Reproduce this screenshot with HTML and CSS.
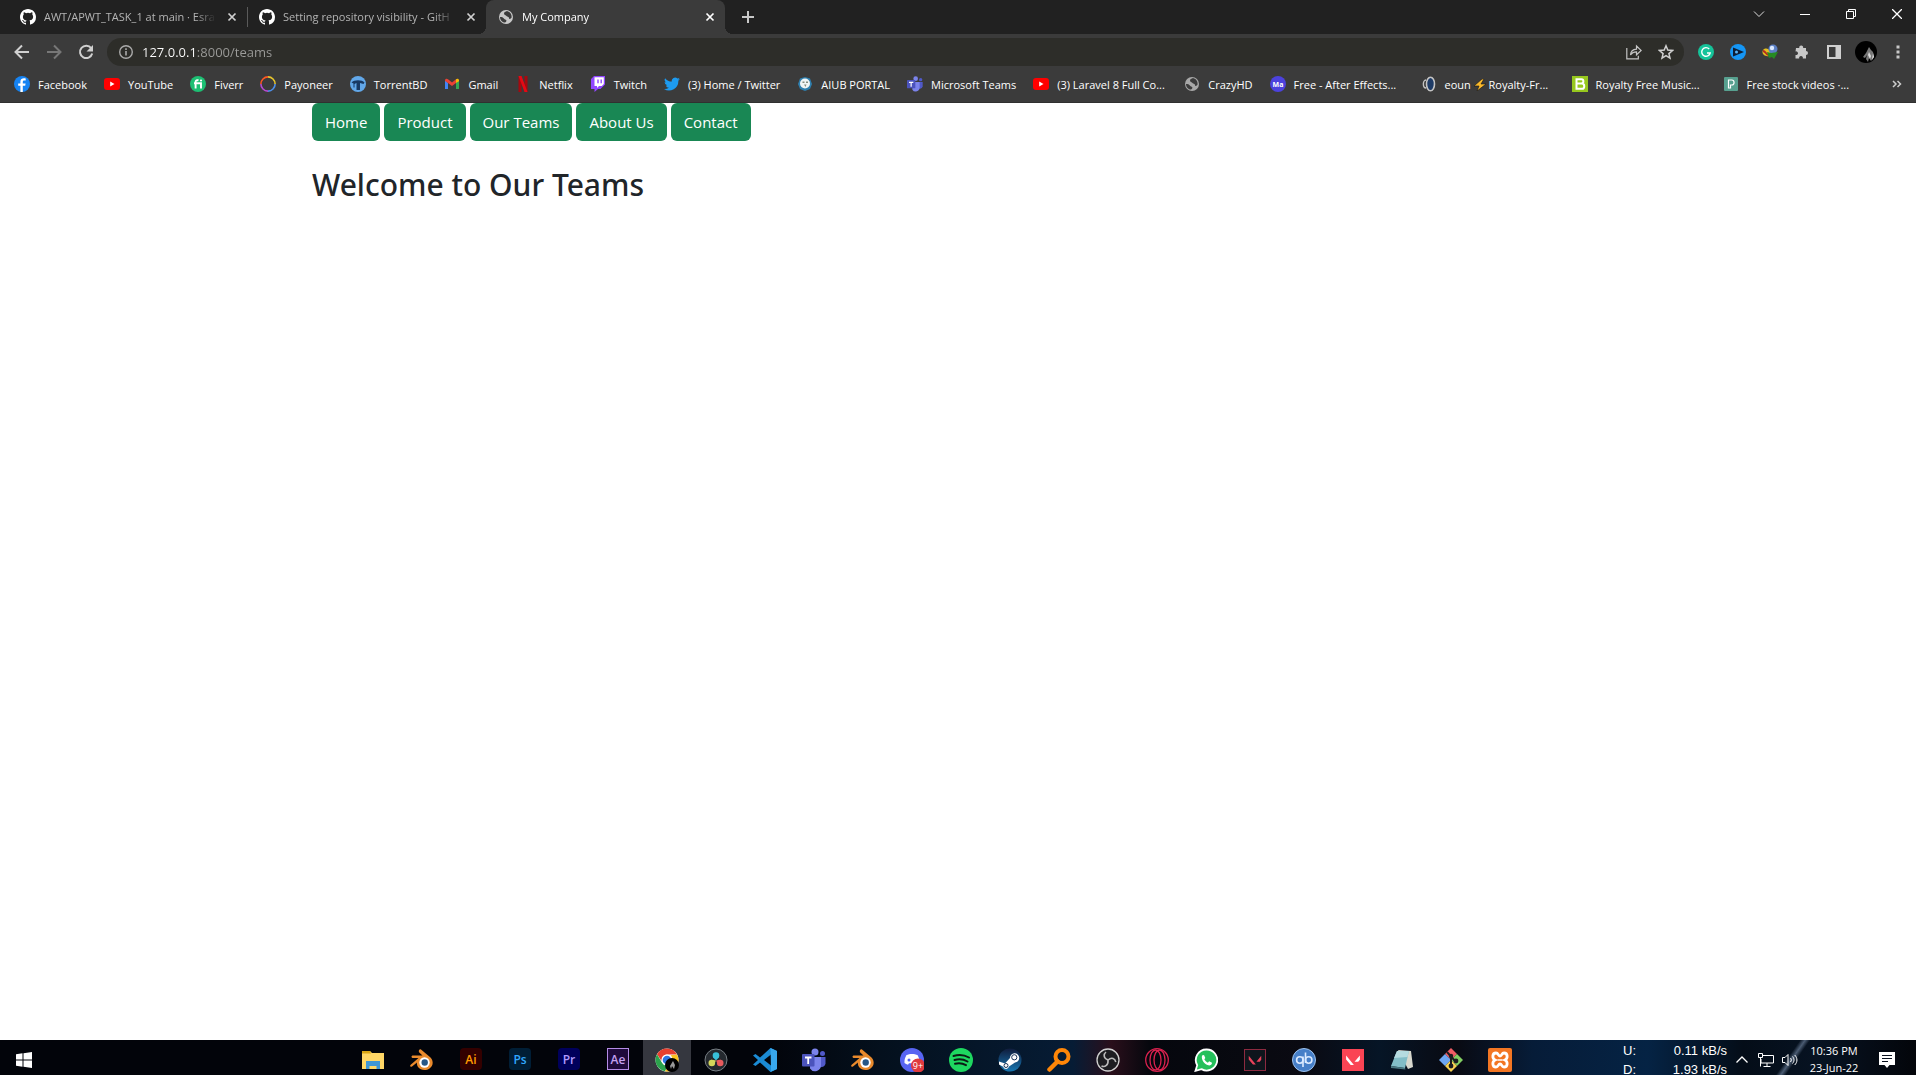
FILE: index.html
```html
<!DOCTYPE html>
<html lang="en">
<head>
<meta charset="utf-8">
<title>My Company</title>
<link rel="stylesheet" href="styles.css">
</head>
<body>
<svg class="sprite" aria-hidden="true">
  <symbol id="github" viewBox="0 0 16 16"><path d="M8 0C3.58 0 0 3.58 0 8c0 3.54 2.29 6.53 5.47 7.59.4.07.55-.17.55-.38 0-.19-.01-.82-.01-1.49-2.01.37-2.53-.49-2.69-.94-.09-.23-.48-.94-.82-1.13-.28-.15-.68-.52-.01-.53.63-.01 1.08.58 1.23.82.72 1.21 1.87.87 2.33.66.07-.52.28-.87.51-1.07-1.78-.2-3.64-.89-3.64-3.95 0-.87.31-1.59.82-2.15-.08-.2-.36-1.02.08-2.12 0 0 .67-.21 2.2.82a7.6 7.6 0 0 1 4 0c1.53-1.04 2.2-.82 2.2-.82.44 1.1.16 1.92.08 2.12.51.56.82 1.27.82 2.15 0 3.07-1.87 3.75-3.65 3.95.29.25.54.73.54 1.48 0 1.07-.01 1.93-.01 2.2 0 .21.15.46.55.38A8 8 0 0 0 16 8c0-4.42-3.58-8-8-8z" fill="#fff"/></symbol>
  <symbol id="globe" viewBox="0 0 16 16"><circle cx="8" cy="8" r="7" fill="currentColor"/><path d="M2 8c2 0 3 .3 3.600 1.300S7 10.500 8 11s.2 1.800-1 2.600C4 13.400 2 11 2 8zM9 2c-1.500 1-3 1-3 2.500S8 6 8.500 7s2.500.5 2.500 2 1 1.200 2.500-.2c.6-2.800-1-5.800-4.500-6.800z" fill="#3c3c3c"/></symbol>
  <symbol id="close" viewBox="0 0 16 16"><path d="M4.500 4.500l7 7m0-7l-7 7" stroke="currentColor" stroke-width="1.700"/></symbol>
  <symbol id="youtube" viewBox="0 0 16 16"><rect y="2" width="16" height="12" rx="3" fill="#f00"/><path d="M6.200 5.500v5L10.500 8z" fill="#fff"/></symbol>
  <symbol id="teams" viewBox="0 0 24 24"><circle cx="13" cy="4" r="3.500" fill="#7b83eb"/><circle cx="20.500" cy="5.500" r="2.500" fill="#5059c9"/><path d="M15 9h8.500v6.500a4.500 4.500 0 0 1-8.500 1z" fill="#5059c9"/><path d="M8 9h11v8a6 6 0 0 1-11 3.500z" fill="#7b83eb"/><rect y="6" width="12.500" height="12.500" rx="1" fill="#4b53bc"/><path d="M3 9.500h6.500M6.200 9.500V16" stroke="#fff" stroke-width="1.800"/></symbol>
  <symbol id="blender" viewBox="0 0 24 24"><path d="M11 1.500l9.500 8c3.500 4 2.500 8.500-1 11s-9 2-11.500-1.500c-1-1.500-1.300-3-1-4.500L2 18.500c-1.500.8-2.500-.8-1.300-1.800L8.500 10H3c-2 0-2-2.500 0-2.500h9.500l-3.200-3C8 3 9.500.5 11 1.500z" fill="#e98a2c"/><circle cx="14.500" cy="14.500" r="5.200" fill="#fff"/><circle cx="14.700" cy="14.500" r="3.200" fill="#265787"/></symbol>
  <symbol id="valorant" viewBox="0 0 24 24"><path d="M4.500 7l8.500 10.500H9.500l-5-6zM19.500 7v4.700L17.700 14h-4z" fill="currentColor"/></symbol>
</svg>

<header class="browser">
  <div class="tab-strip">
    <div class="tab">
      <svg class="favicon"><use href="#github"/></svg>
      <span class="tab-title">AWT/APWT_TASK_1 at main · Esra</span>
      <button class="tab-close" aria-label="Close tab"><svg class="favicon"><use href="#close"/></svg></button>
    </div>
    <div class="tab divided">
      <svg class="favicon"><use href="#github"/></svg>
      <span class="tab-title">Setting repository visibility - GitH</span>
      <button class="tab-close" aria-label="Close tab"><svg class="favicon"><use href="#close"/></svg></button>
    </div>
    <div class="tab active">
      <svg class="favicon"><use href="#globe"/></svg>
      <span class="tab-title">My Company</span>
      <button class="tab-close" aria-label="Close tab"><svg class="favicon"><use href="#close"/></svg></button>
    </div>
    <button class="new-tab" aria-label="New tab"><svg width="14" height="14" viewBox="0 0 14 14"><path d="M7 1v12M1 7h12" stroke="#c8c8c8" stroke-width="2"/></svg></button>
    <div class="window-buttons">
      <button aria-label="Search tabs"><svg width="12" height="12" viewBox="0 0 12 12"><path d="M1 3.500l5 5 5-5" fill="none" stroke="#ddd"/></svg></button>
      <button aria-label="Minimize"><svg width="10" height="10" viewBox="0 0 10 10"><path d="M0 5.500h10" stroke="#fff"/></svg></button>
      <button aria-label="Restore"><svg width="10" height="10" viewBox="0 0 10 10"><path d="M.5 2.500h7v7h-7zM2.500 2.500v-2h7v7h-2" fill="none" stroke="#fff"/></svg></button>
      <button aria-label="Close"><svg width="10" height="10" viewBox="0 0 10 10"><path d="M0 0l10 10M10 0L0 10" stroke="#fff" stroke-width="1.300"/></svg></button>
    </div>
  </div>

  <div class="toolbar">
    <button class="tool" aria-label="Back"><svg width="16" height="16" viewBox="0 0 16 16"><path d="M15 8H2M8 1.500L1.500 8 8 14.500" fill="none" stroke="#d0d0d0" stroke-width="2"/></svg></button>
    <button class="tool" aria-label="Forward"><svg width="16" height="16" viewBox="0 0 16 16"><path d="M1 8h13M8 1.500L14.500 8 8 14.500" fill="none" stroke="#777" stroke-width="2"/></svg></button>
    <button class="tool" aria-label="Reload"><svg width="16" height="16" viewBox="0 0 16 16"><path d="M13.200 4.200A6.200 6.200 0 1 0 14.200 9.500" fill="none" stroke="#d0d0d0" stroke-width="2"/><path d="M15 1v6.500H8.500z" fill="#d0d0d0"/></svg></button>
    <div class="address">
      <svg width="16" height="16" viewBox="0 0 16 16"><circle cx="8" cy="8" r="6.300" fill="none" stroke="#aaa" stroke-width="1.400"/><path d="M8 7v4.500M8 4.300v1.600" stroke="#aaa" stroke-width="1.600"/></svg>
      <input class="url" type="text" aria-label="Address" value="127.0.0.1:8000/teams">
      <button class="tool" aria-label="Share"><svg width="16" height="16" viewBox="0 0 16 16"><path d="M.8 4v10.800h11.500v-3M4.500 11c.3-4 2.500-5.500 6-5.800V2l4.700 4.500-4.700 4.300V7.800C8 7.800 6 8.500 4.500 11z" fill="none" stroke="#c4c4c4" stroke-width="1.200"/></svg></button>
      <button class="tool" aria-label="Bookmark"><svg width="16" height="16" viewBox="0 0 16 16"><path d="M8 1.800l1.800 4.300 4.700.4-3.600 3.100 1.100 4.600L8 11.700l-4 2.500 1.100-4.600-3.600-3.100 4.700-.4z" fill="none" stroke="#d0d0d0" stroke-width="1.500"/></svg></button>
    </div>
    <button class="tool" aria-label="Grammarly"><svg width="16" height="16" viewBox="0 0 16 16"><circle cx="8" cy="8" r="8" fill="#15c39a"/><path d="M11.200 5A4.300 4.300 0 1 0 12.200 9H9" fill="none" stroke="#fff" stroke-width="1.400"/></svg></button>
    <button class="tool" aria-label="Video downloader"><svg width="16" height="16" viewBox="0 0 16 16"><circle cx="8" cy="8" r="8" fill="#1596f5"/><path d="M3 3.500L14 8 3 12.500z" fill="#0e1e35"/><circle cx="6.500" cy="8" r="1.500" fill="#59b5f5"/></svg></button>
    <button class="tool" aria-label="Download manager"><svg width="16" height="16" viewBox="0 0 16 16"><path d="M1 6c3-3 6-1 8 2l-2 4C3 13-1 10 1 6z" fill="#e3c020"/><path d="M1 7c3 0 3 5 7 4" fill="none" stroke="#b52b20" stroke-width="2"/><circle cx="11" cy="5" r="4.500" fill="#5b7fc4"/><circle cx="10" cy="4" r="2.200" fill="#dbe9ff"/><path d="M5 8l4 1 7-1-4 7-2-2-3 1z" fill="#268b22"/></svg></button>
    <button class="tool" aria-label="Extensions"><svg width="16" height="16" viewBox="0 0 16 16"><path d="M2 4h3.300a2 2 0 1 1 3.800 0H12v3a2 2 0 1 1 0 4v3.500H8.800a1.900 1.900 0 1 0-3.600 0H1.500V11a1.900 1.900 0 1 0 0-3.600z" fill="#c8c8c8"/></svg></button>
    <button class="tool" aria-label="Side panel"><svg width="16" height="16" viewBox="0 0 16 16"><path d="M2 2h12v12H2z" fill="none" stroke="#d0d0d0" stroke-width="2"/><path d="M9.500 2H14v12H9.500z" fill="#d0d0d0"/></svg></button>
    <button class="tool" aria-label="Profile"><svg width="22" height="22" viewBox="0 0 22 22"><circle cx="11" cy="11" r="11" fill="#000"/><path d="M14 6l2 3 2 2 1 5-3 4-2-3-1 4-2-3 1-4-2 3-2-1 3-4z" fill="#777"/><path d="M14 11l2 4-1 3-2-4zM18 12l1 4-2 3z" fill="#ddd"/></svg></button>
    <button class="tool" aria-label="Menu"><svg width="16" height="16" viewBox="0 0 16 16"><path d="M6.500 1.500h3v3h-3zM6.500 6.500h3v3h-3zM6.500 11.500h3v3h-3z" fill="#c8c8c8"/></svg></button>
  </div>

  <div class="bookmarks">
    <nav class="bookmark-list" aria-label="Bookmarks">
      <a href="#"><svg class="favicon" viewBox="0 0 16 16"><circle cx="8" cy="8" r="8" fill="#1683f2"/><path d="M8.800 16V9.800h2.400l.4-2.400H8.800V6c0-.9.5-1.400 1.500-1.400h1.400V2.500C9 2 6.400 2.500 6.400 5.500v1.900H4.200v2.400h2.200V16z" fill="#fff"/></svg>Facebook</a>
      <a href="#"><svg class="favicon"><use href="#youtube"/></svg>YouTube</a>
      <a href="#"><svg class="favicon" viewBox="0 0 16 16"><circle cx="8" cy="8" r="8" fill="#1dbf73"/><path d="M5.600 12.500V5.800C5.600 4.300 7 4 8.500 4.300M4 7.200h7v5.300" fill="none" stroke="#fff" stroke-width="1.900"/><circle cx="11" cy="4.500" r="1.100" fill="#fff"/></svg>Fiverr</a>
      <a href="#"><svg class="favicon" viewBox="0 0 16 16"><g fill="none" stroke-width="1.600"><path d="M8 .9A7.100 7.100 0 0 1 15.100 8" stroke="#e7c52d"/><path d="M15.100 8A7.100 7.100 0 0 1 8 15.100" stroke="#4d8ee8"/><path d="M8 15.100A7.100 7.100 0 0 1 .9 8" stroke="#b54bd0"/><path d="M.9 8A7.100 7.100 0 0 1 8 .9" stroke="#ff5722"/></g></svg>Payoneer</a>
      <a href="#"><svg class="favicon" viewBox="0 0 16 16"><circle cx="8" cy="8" r="8" fill="#62a8ea"/><path d="M1.500 6.500C4 3.500 12 3.500 14.500 6.500l-1 1.500-3.500-1V14H6.500V7L4.500 8v3.500H3.500V7.500z" fill="#183963"/></svg>TorrentBD</a>
      <a href="#"><svg class="favicon" viewBox="0 0 16 16"><path d="M1 4v9h3V7z" fill="#4285f4"/><path d="M15 4v9h-3V7z" fill="#34a853"/><path d="M1 4.500c0-2 2-2 3-1.200L8 6.500l4-3.200V7l-4 3-4-3-3-2z" fill="#ea4335"/><path d="M12 3.300c1-.8 3-.8 3 1.200v.8L12 7z" fill="#fbbc04"/></svg>Gmail</a>
      <a href="#"><svg class="favicon" viewBox="0 0 16 16"><path d="M3.500 0h3v16h-3zM9.500 0h3v16h-3z" fill="#a4090f"/><path d="M3.500 0h3l6 16h-3z" fill="#e50914"/></svg>Netflix</a>
      <a href="#"><svg class="favicon" viewBox="0 0 16 16"><path d="M4 0L1 3v10h3.500v3L8 13h2.500L15 8.500V0z" fill="#9146ff"/><path d="M4.500 1.200h9.300V8l-2 2H9l-2 2v-2H4.500z" fill="#fff"/><path d="M8 3.500v3.800M11.200 3.500v3.800" stroke="#9146ff" stroke-width="1.400"/></svg>Twitch</a>
      <a href="#"><svg class="favicon" viewBox="0 0 24 24"><path d="M23.900 4.600a10 10 0 0 1-2.800.8 5 5 0 0 0 2.200-2.700c-1 .6-2 1-3.100 1.200a4.900 4.900 0 0 0-8.400 4.500A14 14 0 0 1 1.700 3.200a4.900 4.900 0 0 0 1.500 6.500c-.8 0-1.600-.2-2.200-.6v.1a4.900 4.900 0 0 0 3.900 4.800 5 5 0 0 1-2.200.1 4.900 4.900 0 0 0 4.600 3.400A9.900 9.900 0 0 1 0 19.500 14 14 0 0 0 21.500 7c1-.7 1.800-1.500 2.400-2.400z" fill="#1d9bf0"/></svg>(3) Home / Twitter</a>
      <a href="#"><svg class="favicon" viewBox="0 0 16 16"><path d="M8 1l5 1.500L15 8l-2 5-5 2-5-2-2-5 2-5.500z" fill="#2f7fae"/><circle cx="8" cy="7.500" r="5" fill="#f1f5f5"/><path d="M5.500 5.500h2v1.500h-2zM9 5.500h2v1.500H9zM7 8.500h2.500L8.500 11z" fill="#858d80"/></svg>AIUB PORTAL</a>
      <a href="#"><svg class="favicon"><use href="#teams"/></svg>Microsoft Teams</a>
      <a class="long" href="#"><svg class="favicon"><use href="#youtube"/></svg>(3) Laravel 8 Full Co...</a>
      <a href="#"><svg class="favicon dim"><use href="#globe"/></svg>CrazyHD</a>
      <a class="long" href="#"><svg class="favicon" viewBox="0 0 16 16"><circle cx="8" cy="8" r="8" fill="#4c42dd"/><text x="8" y="10.500" class="ma">Ma</text></svg>Free - After Effects...</a>
      <a class="long" href="#"><svg class="favicon" viewBox="0 0 16 16"><ellipse cx="9.500" cy="8" rx="4" ry="6.800" fill="#1e3b66" stroke="#c4c4c4" stroke-width="1.600"/><path d="M5 4C1.500 4 1.500 12 5 12" fill="none" stroke="#c4c4c4" stroke-width="1.400"/></svg><span>eoun <svg class="bolt" viewBox="0 0 12 12"><path d="M8 0L0 7h5l-2 5 9-7H7l3-5z" fill="#f9b82b" stroke="#161616" stroke-width=".6"/></svg> Royalty-Fr...</span></a>
      <a class="long" href="#"><svg class="favicon" viewBox="0 0 16 16"><path d="M0 0h16v16H0z" fill="#97c81e"/><path d="M4.500 3.200h5c2.500 0 2.500 4.300 0 4.300h-5 5.500c3 0 3 5.300 0 5.300H4.500z" fill="none" stroke="#fff" stroke-width="2"/></svg>Royalty Free Music...</a>
      <a class="long" href="#"><svg class="favicon" viewBox="0 0 16 16"><rect x="1" y="1" width="14" height="14" rx="1" fill="#57a08f"/><path d="M5.500 4h3.300c3 0 3 5 0 5H7.500v3h-2z" fill="none" stroke="#fff" stroke-width="1.200"/></svg>Free stock videos ·...</a>
    </nav>
    <button class="more" aria-label="More bookmarks"><svg width="10" height="8" viewBox="0 0 10 8"><path d="M1 1l3 3-3 3M5.500 1l3 3-3 3" fill="none" stroke="#ccc" stroke-width="1.500"/></svg></button>
  </div>
</header>

<main class="page">
  <div class="container">
    <nav class="site-nav">
      <a class="btn" href="#">Home</a>
      <a class="btn" href="#">Product</a>
      <a class="btn" href="#">Our Teams</a>
      <a class="btn" href="#">About Us</a>
      <a class="btn" href="#">Contact</a>
    </nav>
    <h1>Welcome to Our Teams</h1>
  </div>
</main>

<footer class="taskbar">
  <button class="start" aria-label="Start"><svg width="16" height="16" viewBox="0 0 16 16"><path d="M0 2.200L6.500 1.300v6.200H0zM7.500 1.200L16 0v7.500H7.500zM0 8.500h6.500v6.200L0 13.800zM7.500 8.500H16V16l-8.500-1.200z" fill="#fff"/></svg></button>
  <div class="apps">
    <button aria-label="File Explorer"><svg viewBox="0 0 24 24"><path d="M1 3h8l2 2h12v16H1z" fill="#ffd766"/><path d="M1 3h8l1 2.500H1z" fill="#d9a514"/><path d="M5 21v-8h14v8h-3.500v-3h-7v3z" fill="#3f97d5"/></svg></button>
    <button aria-label="Blender"><svg><use href="#blender"/></svg></button>
    <button class="adobe ai">Ai</button>
    <button class="adobe ps">Ps</button>
    <button class="adobe pr">Pr</button>
    <button class="adobe ae">Ae</button>
    <button class="open" aria-label="Chrome"><svg viewBox="0 0 24 24"><circle cx="12" cy="12" r="11.500" fill="#fff"/><path d="M2 6.200A11.500 11.500 0 0 1 22 6.500H12a5.500 5.500 0 0 0-5 3.500l-.5 3z" fill="#e8402f"/><path d="M2 6.200l5 8.500a5.500 5.500 0 0 0 6 2.600l-3 6A11.500 11.500 0 0 1 2 6.200z" fill="#2ba24c"/><path d="M22 6.500a11.500 11.500 0 0 1-12 16.800l5-7.500a5.500 5.500 0 0 0 .5-8.500z" fill="#fcc31e"/><circle cx="12" cy="12" r="5.500" fill="#fff"/><circle cx="12" cy="12" r="4.300" fill="#2f75e2"/><circle cx="17" cy="17" r="7" fill="#000"/><path d="M18 13l2 4-1 4-2-3-1 3-1-3z" fill="#999"/></svg></button>
    <button aria-label="DaVinci Resolve"><svg viewBox="0 0 24 24"><circle cx="12" cy="12" r="11" fill="#24292f" stroke="#777e84"/><circle cx="12" cy="7.500" r="3.300" fill="#38bfd8"/><path d="M9 9l3 3.500L15 9z" fill="#38bfd8"/><circle cx="7.800" cy="15" r="3.300" fill="#d3d65a"/><path d="M7 11.800l5 .7-2.200 4.500z" fill="#d3d65a"/><circle cx="16.200" cy="15" r="3.300" fill="#e85b5d"/><path d="M17 11.800l-5 .7 2.200 4.500z" fill="#e85b5d"/></svg></button>
    <button aria-label="VS Code"><svg viewBox="0 0 24 24"><path d="M17.500 0L24 3v18l-6.500 3L7 14.500l-4.500 3.400L0 16.500 5 12 0 7.500l2.500-1.400L7 9.500zM18 6.500L11 12l7 5.500z" fill="#1b8bd4" fill-rule="evenodd"/><path d="M17.500 0L24 3v18l-6.500 3 .5-2z" fill="#38a8ee"/></svg></button>
    <button aria-label="Teams"><svg><use href="#teams"/></svg></button>
    <button aria-label="Blender"><svg><use href="#blender"/></svg></button>
    <button aria-label="Discord"><svg viewBox="0 0 24 24"><circle cx="12" cy="12" r="12" fill="#5865f2"/><path d="M6.500 7c3-1.500 8-1.500 11 0 1.500 2.500 2.200 5 2 8-1 1-2.300 1.500-3.500 1.700l-1-1.500H9l-1 1.500c-1.300-.3-2.500-.8-3.500-1.700-.2-3 .5-5.500 2-8z" fill="#fff"/><circle cx="9" cy="12" r="1.500" fill="#5865f2"/><circle cx="18" cy="17.500" r="7" fill="#e03a3e"/><text x="18" y="21" class="count">9+</text></svg></button>
    <button aria-label="Spotify"><svg viewBox="0 0 24 24"><circle cx="12" cy="12" r="12" fill="#1ed760"/><path d="M4.500 8c5-1.500 11-1 15.500 1.500M5.500 12c4-1.200 9-.8 13 1.500M6 15.800c4-1 7.500-.6 11 1.300" fill="none" stroke="#0b1a14" stroke-width="2" stroke-linecap="round"/></svg></button>
    <button aria-label="Steam"><svg viewBox="0 0 24 24"><defs><linearGradient id="steam" x2="0" y2="1"><stop stop-color="#101c3c"/><stop offset="1" stop-color="#1676b1"/></linearGradient></defs><circle cx="12" cy="12" r="11.500" fill="url(#steam)"/><path d="M1 13.500l6 2 5-5.500a4.600 4.600 0 1 1 5 4.500l-6 4c-1 3.500-5 3-5.800.2L1 16.500z" fill="#fff"/><circle cx="16.300" cy="9.300" r="2.600" fill="#fff" stroke="#183357"/><circle cx="8" cy="17.500" r="2" fill="none" stroke="#183357"/></svg></button>
    <button aria-label="Search"><svg viewBox="0 0 24 24"><circle cx="15" cy="8.500" r="6.500" fill="none" stroke="#ff8708" stroke-width="4"/><path d="M10.500 13.500L2.500 21.500" stroke="#ff8708" stroke-width="4.500" stroke-linecap="round"/></svg></button>
    <button aria-label="OBS Studio"><svg viewBox="0 0 24 24"><circle cx="12" cy="12" r="11" fill="#1d1d21" stroke="#d0d0d0" stroke-width="1.300"/><g fill="none" stroke="#bbb" stroke-width="1.600"><path d="M12 12c-5-2-4.500-6-2-8"/><path d="M12 12c4-3.500 7-1.200 7.800 2"/><path d="M12 12c.6 5-3 7.500-6.500 6"/></g></svg></button>
    <button aria-label="Opera GX"><svg viewBox="0 0 24 24"><g fill="none" stroke="#d9214e" stroke-width="1.300"><circle cx="12" cy="12" r="11.300"/><ellipse cx="10.500" cy="12" rx="5.500" ry="10"/><ellipse cx="14.500" cy="12" rx="5.500" ry="10"/></g></svg></button>
    <button aria-label="WhatsApp"><svg viewBox="0 0 24 24"><path d="M12.500 1.500a10.500 10.500 0 1 1-5 19.600L1.500 22.800l1.700-5.600A10.500 10.500 0 0 1 12.500 1.500z" fill="#25c05b" stroke="#fff" stroke-width="1.800"/><path d="M8 7.500l2-.5 1.300 3-1 1.300c.8 1.600 2 2.700 3.600 3.400l1.200-1.400 2.900 1.400c0 2-2 3-3.700 2.600C10.500 16.500 7 12 8 7.500z" fill="#fff"/></svg></button>
    <button aria-label="Valorant"><svg class="tile outline" viewBox="0 0 24 24"><use href="#valorant"/></svg></button>
    <button aria-label="qBittorrent"><svg viewBox="0 0 24 24"><circle cx="12" cy="12" r="11.500" fill="#467fc8" stroke="#9fc3ed"/><g fill="none" stroke="#dbeaff" stroke-width="1.600"><circle cx="7.800" cy="12" r="3.200"/><path d="M11 8.500V19M13.500 4.500V15"/><circle cx="16.700" cy="12" r="3.200"/></g></svg></button>
    <button aria-label="Riot Client"><svg class="tile filled" viewBox="0 0 24 24"><use href="#valorant"/></svg></button>
    <button aria-label="Notepad"><svg viewBox="0 0 24 24"><path d="M8 2l13 1 2 16-5 2z" fill="#d8d8ce"/><path d="M7 3l12 0-4 17-14-2z" fill="#82bdc7"/><path d="M7 3h12l-1.500 6L4 10z" fill="#b5dbe0"/><path d="M1 18l14 2 .5 1.500L1 20z" fill="#4a7882"/></svg></button>
    <button aria-label="Git Bash"><svg viewBox="0 0 24 24"><path d="M12 0l6 6-6 6-6-6z" fill="#ef5d64"/><path d="M6 6l6 6-6 6-6-6z" fill="#6da6f2"/><path d="M18 6l6 6-6 6-6-6z" fill="#82cf63"/><path d="M12 12l6 6-6 6-6-6z" fill="#f5cf51"/><path d="M8 4l8 9M12 8v10" stroke="#1c1c20" stroke-width="2"/><circle cx="12" cy="8" r="2.200" fill="#1c1c20"/><circle cx="17" cy="13" r="2.400" fill="#1c1c20"/><circle cx="12" cy="18" r="2.400" fill="#1c1c20"/></svg></button>
    <button aria-label="XAMPP"><svg viewBox="0 0 24 24"><rect width="24" height="24" rx="2" fill="#f37623"/><path d="M7 12c-3-1.500-3-7 1-7 2.500 0 2 3 4 3s1.500-3 4-3c4 0 4 5.500 1 7 3 1.500 3 7-1 7-2.500 0-2-3-4-3s-1.500 3-4 3c-4 0-4-5.500-1-7z" fill="none" stroke="#fff" stroke-width="2.800"/><path d="M9.500 12h5" stroke="#fff" stroke-width="1.500"/></svg></button>
  </div>
  <div class="tray">
    <dl class="net-speed"><dt>U:</dt><dd>0.11 kB/s</dd><dt>D:</dt><dd>1.93 kB/s</dd></dl>
    <button aria-label="Show hidden icons"><svg width="14" height="16" viewBox="0 0 14 16"><path d="M1.500 10.500L7 5l5.500 5.500" fill="none" stroke="#fff" stroke-width="1.300"/></svg></button>
    <button aria-label="Network"><svg width="16" height="16" viewBox="0 0 16 16"><path d="M5 3.500h10.500v7.500H3V7M9 11v3M5.500 14.500h7" fill="none" stroke="#fff"/><path d="M.5 1.500h4v4h-4zM2.500 5.500v9" fill="none" stroke="#fff"/></svg></button>
    <button aria-label="Volume"><svg width="16" height="16" viewBox="0 0 16 16"><path d="M.5 5.500H3l3-3v11l-3-3H.5z" fill="none" stroke="#fff"/><path d="M8.500 6c1 1.300 1 2.700 0 4M10.500 4.500c2 2.300 2 4.700 0 7M12.700 3c3 3 3 7 0 10" fill="none" stroke="#fff"/></svg></button>
    <time class="clock" datetime="2022-06-23T22:36">10:36 PM<br>23-Jun-22</time>
    <button class="notice" aria-label="Notifications"><svg width="16" height="16" viewBox="0 0 16 16"><path d="M0 0h16v13h-5.500L8 16l-2.500-3H0z" fill="#fff"/><path d="M3 3.500h10M3 6.500h10M3 9.500h6" stroke="#0a1220"/></svg></button>
  </div>
</footer>
</body>
</html>
```

FILE: styles.css
```css
* {
  box-sizing: border-box;
}

body {
  margin: 0;
  min-height: 100vh;
  display: flex;
  flex-direction: column;
  background: #fff;
  color: #212529;
  font-family: "Open Sans", "Noto Sans", sans-serif;
  font-size: 11px;
}

button {
  margin: 0;
  padding: 0;
  border: 0;
  background: none;
  color: inherit;
  font: inherit;
  display: flex;
  align-items: center;
  justify-content: center;
}

a {
  color: inherit;
  text-decoration: none;
}

svg {
  flex: none;
}

.sprite {
  display: none;
}

.favicon {
  width: 16px;
  height: 16px;
  display: block;
}

/* Browser chrome */
.browser {
  background: #3b3b3b;
  color: #fff;
  border-bottom: 1px solid #303030;
}

.tab-strip {
  height: 34px;
  padding-left: 8px;
  display: flex;
  background: #212121;
}

.tab {
  width: 239px;
  padding: 0 7px 0 12px;
  display: flex;
  align-items: center;
  gap: 8px;
  color: #b4b4b4;
  position: relative;
}

.tab-title {
  flex: 1;
  overflow: hidden;
  padding-bottom: 2px;
  white-space: nowrap;
  mask-image: linear-gradient(90deg, #000 88%, transparent);
}

.tab-close {
  color: #d0d0d0;
}

.tab.divided::before {
  content: "";
  width: 1px;
  height: 20px;
  position: absolute;
  left: 0;
  background: #5a5a5a;
}

.tab.active {
  background: #3b3b3b;
  border-radius: 8px 8px 0 0;
  color: #fff;
}

.tab.active .favicon {
  color: #c8c8c8;
}

.tab.active .tab-close .favicon {
  color: #fff;
}

.tab.active::before,
.tab.active::after {
  content: "";
  width: 8px;
  height: 8px;
  position: absolute;
  bottom: 0;
}

.tab.active::before {
  left: -8px;
  background: radial-gradient(circle at 0 0, transparent 8px, #3b3b3b 8px);
}

.tab.active::after {
  right: -8px;
  background: radial-gradient(circle at 100% 0, transparent 8px, #3b3b3b 8px);
}

.new-tab {
  width: 46px;
}

.window-buttons {
  margin-left: auto;
  height: 28px;
  display: flex;
  align-items: stretch;
}

.window-buttons button {
  width: 46px;
}

.window-buttons button:last-child {
  width: 42px;
  padding-left: 4px;
}

.toolbar {
  height: 36px;
  padding: 0 2px 0 6px;
  display: flex;
  align-items: center;
}

.tool {
  width: 32px;
  height: 28px;
}

.address {
  flex: 1;
  height: 28px;
  margin: 0 6px 0 5px;
  padding: 0 2px 0 11px;
  display: flex;
  align-items: center;
  border-radius: 14px;
  background: #2d2d29;
}

.url {
  flex: 1;
  min-width: 0;
  margin-left: 8px;
  padding: 0;
  border: 0;
  outline: 0;
  color: transparent;
  font: inherit;
  font-size: 13px;
  background: linear-gradient(90deg, #fff 54px, #9c9c9a 54px);
  background-clip: text;
}

.bookmarks {
  height: 32px;
  padding: 0 12px 4px 14px;
  display: flex;
  align-items: center;
}

.bookmark-list {
  flex: 1;
  display: flex;
  gap: 17px;
  white-space: nowrap;
}

.bookmark-list a {
  display: flex;
  align-items: center;
  gap: 8px;
}

.bookmark-list .long {
  min-width: 134px;
}

.dim {
  color: #a8a8a8;
}

.bolt {
  width: 12px;
  height: 12px;
  vertical-align: -2px;
}

.ma {
  fill: #fff;
  font-size: 7px;
  font-weight: 700;
  text-anchor: middle;
}

.more {
  width: 14px;
}

/* Page */
.page {
  flex: 1;
}

.container {
  max-width: 1316px;
  margin: 0 auto;
  padding: 0 12px;
}

.site-nav {
  display: flex;
  gap: 4px;
}

.btn {
  padding: 7px 13px;
  border-radius: 6px;
  background: #198754;
  color: #fff;
  font-size: 15px;
  line-height: 24px;
}

h1 {
  margin: 24px 0 8px;
  font-family: "Noto Sans", "Open Sans", sans-serif;
  font-size: 30px;
  font-weight: 500;
  line-height: 40px;
}

/* Taskbar */
.taskbar {
  height: 35px;
  overflow: hidden;
  display: flex;
  align-items: flex-start;
  color: #fff;
  background:
    linear-gradient(125deg, transparent 44%, #4b5c73 50%, transparent 56%) 95% 0 / 60px 100% no-repeat,
    linear-gradient(90deg, #02040a 0 40%, #04101d 46%, #061c35 56%, #2a0f1b 58%, #05070d 60%, #0a0a12 68%, #061526 72%, #090a12 76%, #061c38 80%, #052344 86%, #040d18 91%, #071322 95%, #03050a);
}

.taskbar button {
  height: 40px;
}

.start {
  width: 48px;
}

.apps {
  margin-left: 301px;
  display: flex;
  gap: 1px;
}

.apps button {
  width: 48px;
}

.apps svg {
  width: 24px;
  height: 24px;
}

.apps .open {
  background: #35373f;
}

.apps .adobe {
  width: 22px;
  height: 22px;
  margin: 8px 13px;
  border-radius: 4px;
  font-size: 12px;
  font-weight: 600;
}

.apps .ai {
  background: #330000;
  color: #ff9a00;
}

.apps .ps {
  background: #001e36;
  color: #31a8ff;
}

.apps .pr {
  background: #00005b;
  color: #b09aff;
}

.apps .ae {
  border: 1px solid #b48ce6;
  border-radius: 0;
  background: #1f0a3c;
  color: #c3a0f0;
}

.count {
  fill: #fff;
  font-size: 9px;
  text-anchor: middle;
}

.apps .tile {
  width: 22px;
  height: 22px;
}

.outline {
  border: 1px solid #8c2a40;
  background: #0e151c;
  color: #e8425a;
}

.filled {
  background: #fa4454;
  color: #fff;
}

.tray {
  margin-left: auto;
  display: flex;
}

.tray button {
  width: 24px;
}

.net-speed {
  width: 104px;
  margin: 3px 3px 0 0;
  display: grid;
  grid-template-columns: auto auto;
  justify-content: space-between;
  font: 13px/16px "Liberation Sans", Arial, sans-serif;
}

.net-speed dd {
  margin: 0;
  text-align: right;
}

.clock {
  width: 64px;
  margin-top: 2px;
  line-height: 17px;
  text-align: center;
}

.tray .notice {
  width: 42px;
  margin-right: 8px;
}
```
